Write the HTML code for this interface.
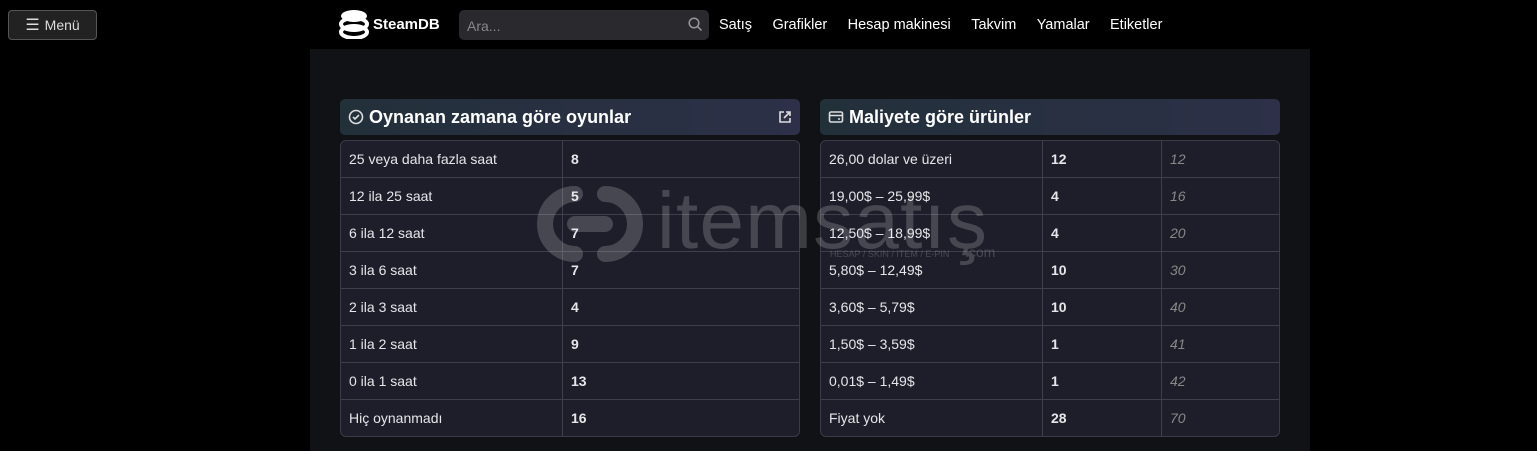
<!DOCTYPE html>
<html><head><meta charset="utf-8"><style>
*{box-sizing:border-box;margin:0;padding:0}
body{width:1537px;height:451px;background:#000;font-family:"Liberation Sans",sans-serif;color:#e6e6ea;position:relative;overflow:hidden}
.menu{position:absolute;left:8px;top:10px;width:89px;height:30px;border:1px solid #555;border-radius:4px;background:#222;font-size:14px;display:flex;align-items:center;justify-content:center;gap:5px;color:#ddd}
.logo{position:absolute;left:339px;top:9px;display:flex;align-items:center;gap:4px;font-weight:bold;font-size:15px;color:#fff}
.search{position:absolute;left:459px;top:10px;width:250px;height:30px;background:#2a2a2e;border-radius:5px;color:#888;font-size:14px;padding:8px 8px}
.nav{position:absolute;left:719px;top:17px;font-size:14.5px;color:#fff;display:flex;gap:20.4px}
.main{position:absolute;left:310px;top:49px;width:1000px;height:402px;background:#111216}
.hdr{position:absolute;top:99px;height:36px;border-radius:5px;background:linear-gradient(90deg,#22303a,#2d3048);font-weight:bold;font-size:18px;color:#fff;display:flex;align-items:center;padding-left:8px;gap:5px}
table{position:absolute;top:140px;border-collapse:separate;border-spacing:0;background:#1e1e2a;border:1px solid #3a3a48;border-radius:6px;font-size:14px}
td{height:37px;border-top:1px solid #3e3e4c;padding-left:8px;border-left:1px solid #3e3e4c;padding-bottom:1px}
tr:first-child td{border-top:none;height:36px}
td:first-child{border-left:none}
td.b{font-weight:bold}
td.i{font-style:italic;color:#888}
.wm{position:absolute;left:535px;top:182px;opacity:.18;pointer-events:none}
</style></head><body>
<div class="menu"><span style="font-size:16px">☰</span>Menü</div>
<div class="logo"><svg width="30" height="30" viewBox="0 0 30 30"><ellipse cx="15" cy="7" rx="13" ry="6" fill="#fff"/><ellipse cx="15" cy="15" rx="13" ry="6" fill="none" stroke="#fff" stroke-width="4"/><ellipse cx="15" cy="23" rx="13" ry="6" fill="none" stroke="#fff" stroke-width="4"/></svg>SteamDB</div>
<div class="search">Ara...<svg style="position:absolute;right:6px;top:7px" width="15" height="15" viewBox="0 0 15 15"><circle cx="6" cy="6" r="4.8" fill="none" stroke="#999" stroke-width="1.5"/><path d="M9.5 9.5l4 4" stroke="#999" stroke-width="1.5"/></svg></div>
<div class="nav"><span>Satış</span><span>Grafikler</span><span>Hesap makinesi</span><span>Takvim</span><span>Yamalar</span><span>Etiketler</span></div>
<div class="main"></div>
<div class="hdr" style="left:340px;width:460px"><svg width="16" height="16" viewBox="0 0 16 16"><circle cx="8" cy="8" r="6.5" fill="none" stroke="#ddd" stroke-width="1.6"/><path d="M5 8l2 2 4-4" stroke="#ddd" stroke-width="1.6" fill="none"/></svg>Oynanan zamana göre oyunlar<svg style="position:absolute;right:8px" width="14" height="14" viewBox="0 0 14 14"><path d="M6 2H2v10h10V8M8 2h4v4M12 2L6 8" stroke="#ddd" stroke-width="1.6" fill="none"/></svg></div>
<div class="hdr" style="left:820px;width:460px"><svg width="16" height="16" viewBox="0 0 16 16"><rect x="1.5" y="3" width="13" height="10" rx="1.5" fill="none" stroke="#ddd" stroke-width="1.6"/><path d="M1.5 6.5h13M10 10h2" stroke="#ddd" stroke-width="1.6"/></svg>Maliyete göre ürünler</div>
<table style="left:340px;width:460px"><colgroup><col style="width:221px"><col></colgroup>
<tr><td>25 veya daha fazla saat</td><td class="b">8</td></tr>
<tr><td>12 ila 25 saat</td><td class="b">5</td></tr>
<tr><td>6 ila 12 saat</td><td class="b">7</td></tr>
<tr><td>3 ila 6 saat</td><td class="b">7</td></tr>
<tr><td>2 ila 3 saat</td><td class="b">4</td></tr>
<tr><td>1 ila 2 saat</td><td class="b">9</td></tr>
<tr><td>0 ila 1 saat</td><td class="b">13</td></tr>
<tr><td>Hiç oynanmadı</td><td class="b">16</td></tr></table>
<table style="left:820px;width:460px"><colgroup><col style="width:221px"><col style="width:119px"><col></colgroup>
<tr><td>26,00 dolar ve üzeri</td><td class="b">12</td><td class="i">12</td></tr>
<tr><td>19,00$ – 25,99$</td><td class="b">4</td><td class="i">16</td></tr>
<tr><td>12,50$ – 18,99$</td><td class="b">4</td><td class="i">20</td></tr>
<tr><td>5,80$ – 12,49$</td><td class="b">10</td><td class="i">30</td></tr>
<tr><td>3,60$ – 5,79$</td><td class="b">10</td><td class="i">40</td></tr>
<tr><td>1,50$ – 3,59$</td><td class="b">1</td><td class="i">41</td></tr>
<tr><td>0,01$ – 1,49$</td><td class="b">1</td><td class="i">42</td></tr>
<tr><td>Fiyat yok</td><td class="b">28</td><td class="i">70</td></tr></table>
<div class="wm"><svg width="480" height="85" viewBox="0 0 480 85"><path d="M40 12a30 30 0 1 0 0 60M70 12a30 30 0 1 1 0 60M40 42h30" stroke="#fff" stroke-width="16" fill="none" stroke-linecap="round"/><text x="122" y="66" font-family="Liberation Sans" font-size="80" fill="#fff" textLength="330">itemsatış</text><text x="295" y="75" font-family="Liberation Sans" font-size="9" fill="#fff">HESAP / SKIN / ITEM / E-PIN</text><text x="430" y="75" font-family="Liberation Sans" font-size="14" fill="#fff">.com</text></svg></div>
</body></html>
